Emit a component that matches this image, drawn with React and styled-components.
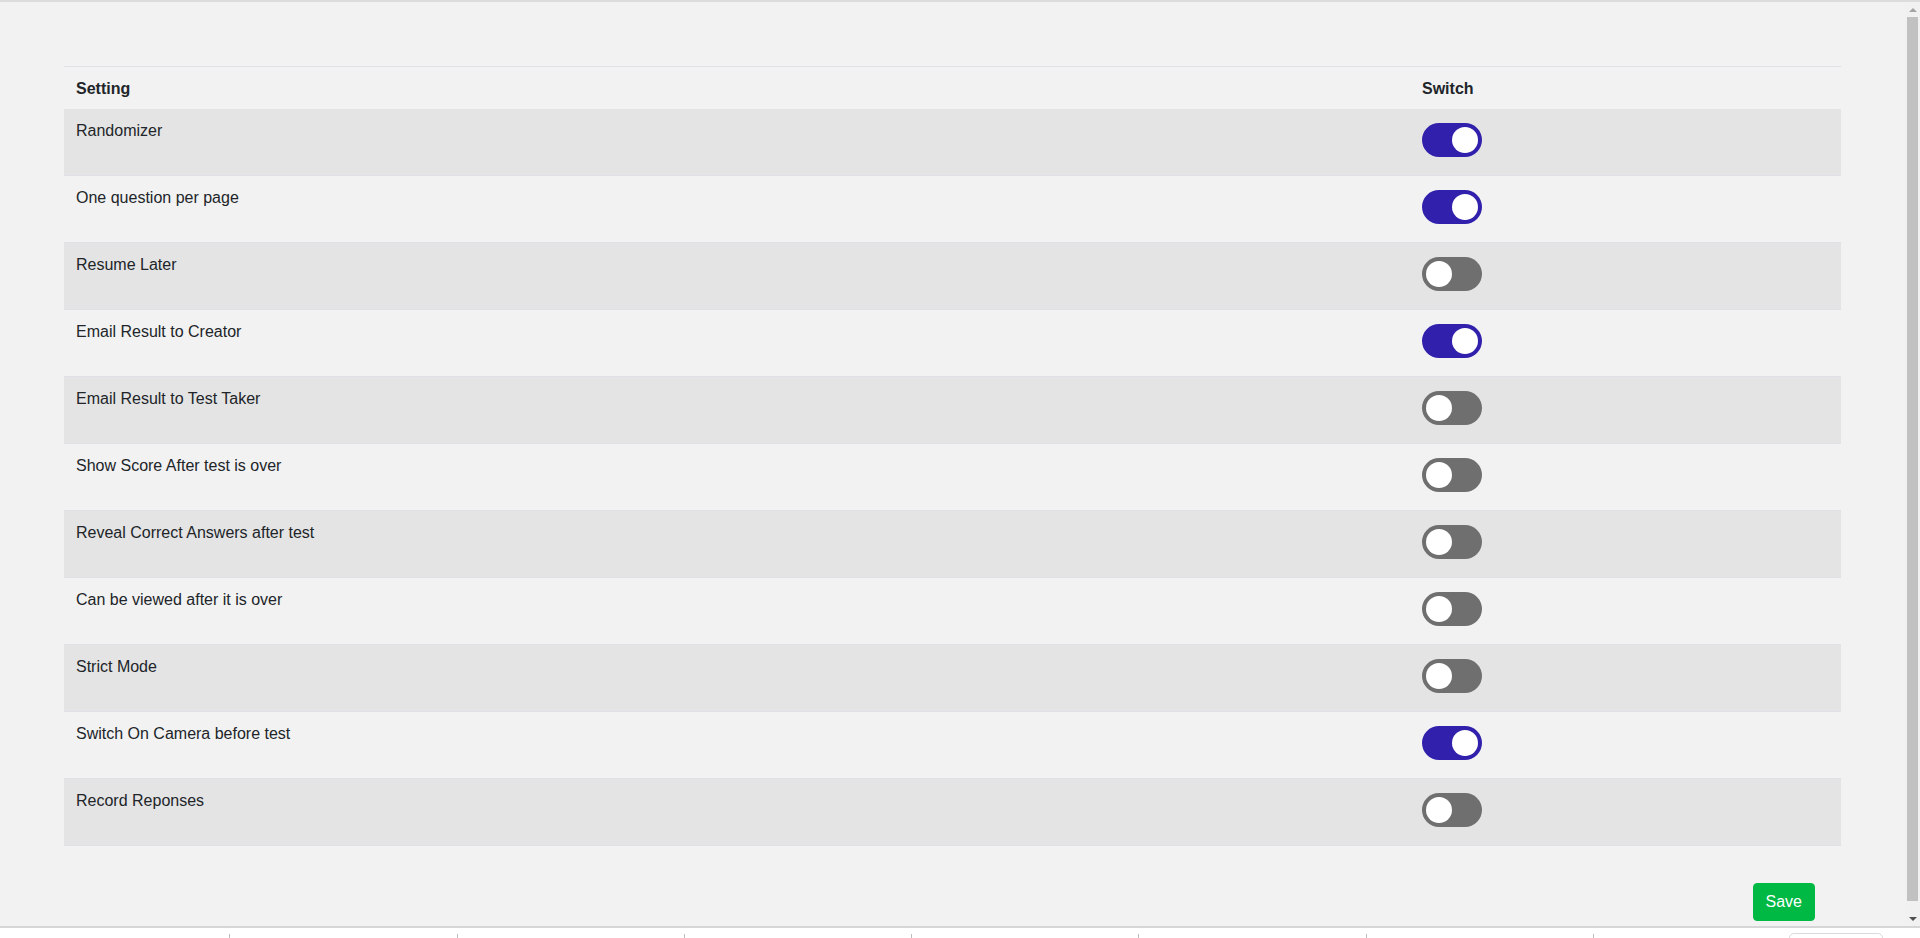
import React, { useState } from 'react';
import styled, { createGlobalStyle } from 'styled-components';

const GlobalStyle = createGlobalStyle`
  html, body {
    margin: 0;
    padding: 0;
    height: 100%;
    overflow: hidden;
    background: #ffffff;
    font-family: "Liberation Sans", Arial, sans-serif;
    color: #212529;
  }
`;

const Frame = styled.div`
  display: flex;
  flex-direction: column;
  height: 938px;
  border-top: 2px solid #dcdcdc;
  box-sizing: border-box;
`;

const ScrollArea = styled.div`
  display: flex;
  height: 924px;
  flex-shrink: 0;
  background: #f2f2f2;
  border-bottom: 2px solid #d6d6d6;
  box-sizing: content-box;
`;

const Content = styled.div`
  flex: 1;
  overflow: hidden;
  padding: 64px 64px 16px;
`;

const Scrollbar = styled.div`
  width: 15px;
  display: flex;
  flex-direction: column;
  background: #f1f1f1;
`;

const Arrow = styled.div`
  height: 15px;
  display: flex;
  align-items: center;
  justify-content: center;

  &::before {
    content: '';
    border-left: 4px solid transparent;
    border-right: 4px solid transparent;
    ${(p) =>
      p.$down
        ? 'border-top: 4px solid #505050;'
        : 'border-bottom: 4px solid #a3a3a3;'}
  }
`;

const Thumb = styled.div`
  flex: 1;
  margin: 0 2px 10px;
  background: #c1c1c1;
`;

const Table = styled.div`
  border-top: 1px solid #dee2e6;
`;

const Row = styled.div`
  display: grid;
  grid-template-columns: 1fr 431px;
  height: ${(p) => (p.$head ? '42px' : '67px')};
  box-sizing: border-box;
  background: ${(p) => (p.$striped ? '#e4e4e4' : '#f2f2f2')};
  border-bottom: 1px solid ${(p) => (p.$head ? '#f2f2f2' : '#e0e1e6')};
`;

const Cell = styled.div`
  padding: 10px 12px 8px;
  font-size: 16px;
  line-height: 24px;
  font-weight: ${(p) => (p.$bold ? 700 : 400)};
`;

const SwitchLabel = styled.label`
  position: relative;
  display: block;
  width: 60px;
  height: 34px;
  margin-top: 4px;
  cursor: pointer;

  input {
    opacity: 0;
    width: 0;
    height: 0;
    position: absolute;
  }
`;

const Track = styled.span`
  position: absolute;
  inset: 0;
  border-radius: 34px;
  background: ${(p) => (p.$on ? '#3020ab' : '#6f6f6f')};
  transition: background 0.2s;

  &::before {
    content: '';
    position: absolute;
    width: 26px;
    height: 26px;
    top: 4px;
    left: ${(p) => (p.$on ? '30px' : '4px')};
    border-radius: 50%;
    background: #ffffff;
    transition: left 0.2s;
  }
`;

const Actions = styled.div`
  display: flex;
  justify-content: flex-end;
  padding-right: 26px;
  margin-top: 37px;
`;

const SaveButton = styled.button`
  font-family: "Liberation Sans", Arial, sans-serif;
  font-size: 16px;
  line-height: 24px;
  padding: 6px 12px;
  color: #ffffff;
  background: #00b944;
  border: 1px solid #00b944;
  border-radius: 4px;
  cursor: pointer;
`;

const Footer = styled.div`
  flex: 1;
  display: flex;
  align-items: flex-start;
  padding-left: 3px;
  background: #ffffff;
  overflow: hidden;
`;

const FooterItem = styled.div`
  width: 227.3px;
  height: 20px;
  margin-top: 6px;
  box-sizing: border-box;
  border-right: 1px solid #bdbdbd;
`;

const FooterBox = styled.div`
  width: 94px;
  height: 24px;
  margin: 5px 37px 0 auto;
  box-sizing: border-box;
  border: 1px solid #d9d9de;
  border-radius: 5px;
`;

const initial = [
  ['Randomizer', true],
  ['One question per page', true],
  ['Resume Later', false],
  ['Email Result to Creator', true],
  ['Email Result to Test Taker', false],
  ['Show Score After test is over', false],
  ['Reveal Correct Answers after test', false],
  ['Can be viewed after it is over', false],
  ['Strict Mode', false],
  ['Switch On Camera before test', true],
  ['Record Reponses', false],
];

const App = () => {
  const [settings, setSettings] = useState(initial);

  const toggle = (index) => {
    setSettings((prev) =>
      prev.map((s, i) => (i === index ? [s[0], !s[1]] : s))
    );
  };

  return (
    <>
      <GlobalStyle />
      <Frame>
        <ScrollArea>
          <Content>
            <Table>
              <Row $head>
                <Cell $bold>Setting</Cell>
                <Cell $bold>Switch</Cell>
              </Row>
              {settings.map(([name, on], i) => (
                <Row key={name} $striped={i % 2 === 0}>
                  <Cell>{name}</Cell>
                  <Cell>
                    <SwitchLabel>
                      <input
                        type='checkbox'
                        checked={on}
                        onChange={() => toggle(i)}
                      />
                      <Track $on={on} />
                    </SwitchLabel>
                  </Cell>
                </Row>
              ))}
            </Table>
            <Actions>
              <SaveButton type='button'>Save</SaveButton>
            </Actions>
          </Content>
          <Scrollbar>
            <Arrow />
            <Thumb />
            <Arrow $down />
          </Scrollbar>
        </ScrollArea>
        <Footer>
          {Array.from({ length: 7 }).map((_, i) => (
            <FooterItem key={i} />
          ))}
          <FooterBox />
        </Footer>
      </Frame>
    </>
  );
};

export default App;
